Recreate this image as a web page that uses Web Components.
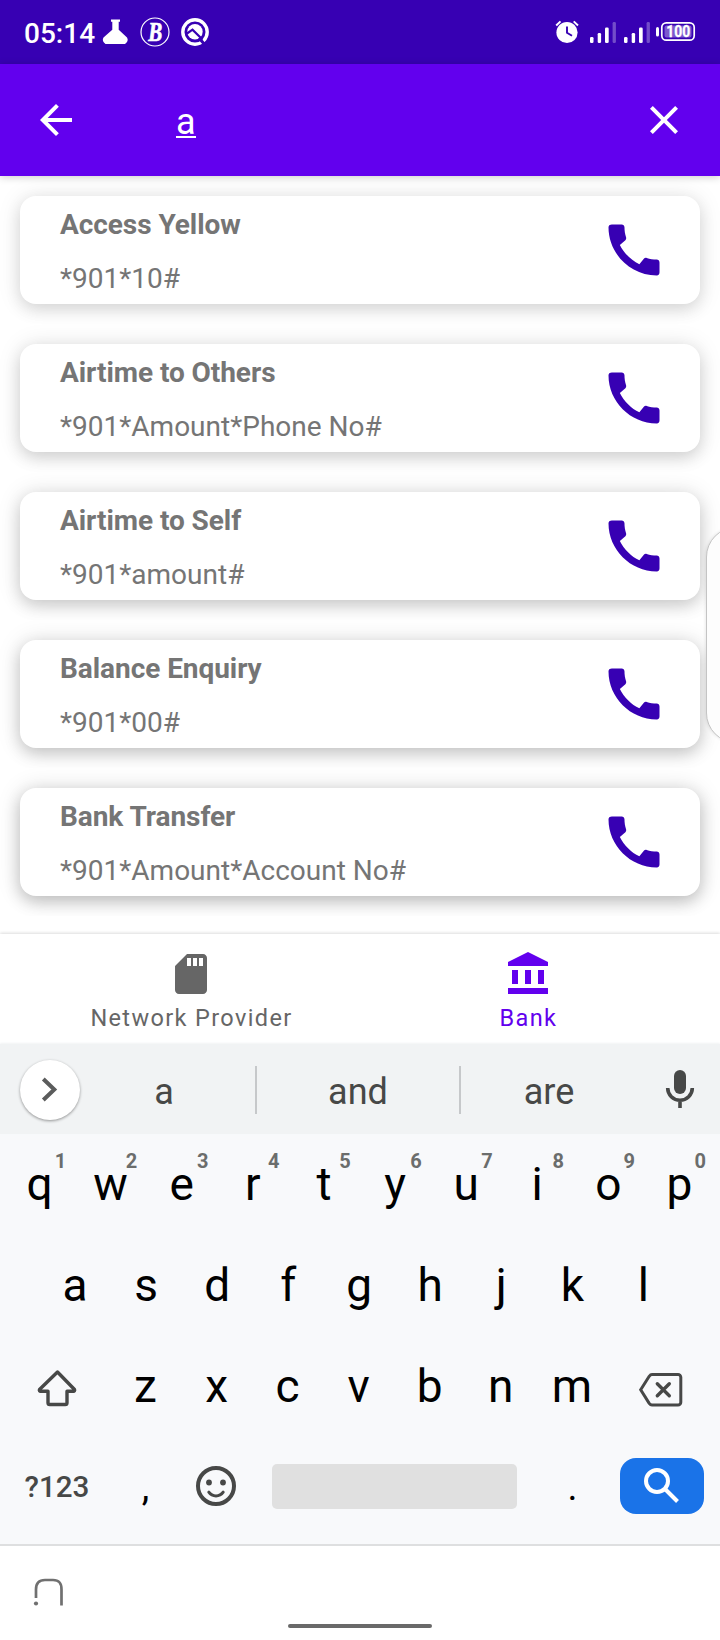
<!DOCTYPE html>
<html lang="en">
<head>
<meta charset="utf-8">
<title>USSD codes</title>
<style>
html,body{margin:0;padding:0;background:#fff}
body{font-family:Roboto,"Liberation Sans",sans-serif;width:720px;height:1640px;overflow:hidden}
</style>
</head>
<body>
<phone-screen>
  <status-bar></status-bar>
  <search-bar>a</search-bar>
  <code-list>
    <code-card style="--a:.11;--b:.10" label="Access Yellow">*901*10#</code-card>
    <code-card style="--a:.13;--b:.11" label="Airtime to Others">*901*Amount*Phone No#</code-card>
    <code-card style="--a:.15;--b:.12" label="Airtime to Self">*901*amount#</code-card>
    <code-card style="--a:.17;--b:.13" label="Balance Enquiry">*901*00#</code-card>
    <code-card style="--a:.19;--b:.14" label="Bank Transfer">*901*Amount*Account No#</code-card>
  </code-list>
  <bottom-tabs></bottom-tabs>
  <suggestion-strip></suggestion-strip>
  <soft-keyboard></soft-keyboard>
  <gesture-bar></gesture-bar>
  <edge-panel></edge-panel>
</phone-screen>
<script>
const make = (name, html) => customElements.define(name, class extends HTMLElement {
  constructor() {
    super();
    this.attachShadow({mode: 'open'}).innerHTML = html;
  }
});

make('phone-screen', `<style>:host{display:flex;flex-direction:column;position:relative;width:720px;height:1640px;background:#fff;overflow:hidden}</style><slot></slot>`);

make('status-bar', `<style>
:host{display:flex;box-sizing:border-box;flex:none;height:64px;background:#3700b3;color:#fff;padding:0 19px 0 24px;justify-content:space-between}
.g{display:flex}
.t{font-size:28px;font-weight:500;line-height:67px;width:76px;white-space:nowrap}
svg{display:block}
</style>
<div class="g"><span class="t">05:14</span>
<svg width="116" height="64" viewBox="100 0 116 64" fill="#fff">
<path d="M111 19.500h9v2.200h-1.300v8.100l8.300 7.700c1.500 2.500 .5 4.500-2 6.500h-19.500c-2.500-2-3.500-4-2-6.500l8.800-7.700v-8.100h-1.300z"/>
<circle cx="155" cy="32" r="14" fill="none" stroke="#fff" stroke-width="1.200"/>
<text x="148.200" y="40.500" textLength="14" lengthAdjust="spacingAndGlyphs" font-family="Liberation Serif,serif" font-style="italic" font-weight="700" font-size="27" stroke="#fff" stroke-width=".7">B</text>
<circle cx="195" cy="32" r="12.200" fill="none" stroke="#fff" stroke-width="3.400"/>
<circle cx="195" cy="31.800" r="7.700"/>
<path d="M187 33.500l5.500-3.800 10 9.800" fill="none" stroke="#3700b3" stroke-width="2.200"/>
<path d="M199 38l6.500 7.500" stroke="#3700b3" stroke-width="3"/>
</svg></div>
<svg width="150" height="64" viewBox="551 0 150 64">
<circle cx="567" cy="32.500" r="10.600" fill="#fff"/>
<path d="M556.200 25.500l4.300-4.100M578 25.500l-4.300-4.100" stroke="#fff" stroke-width="2"/>
<path d="M567 26.500v6.300l5 3" fill="none" stroke="#3700b3" stroke-width="1.900"/>
<g id="s" fill="#fff"><rect x="590" y="37" width="3.500" height="6" rx="1.300"/><rect x="597.700" y="33" width="3.400" height="10" rx="1.300"/><rect x="605" y="27.500" width="3.700" height="15.500" rx="1.300"/><rect x="612.600" y="22" width="3.300" height="21" rx="1.300" opacity=".3"/></g>
<use href="#s" x="34"/>
<rect x="656" y="27" width="3" height="9.500" rx="1.500" fill="#fff"/>
<rect x="661.800" y="22.800" width="32.400" height="17.400" rx="4.500" fill="none" stroke="#fff" stroke-width="1.700"/>
<rect x="664.500" y="25.500" width="27" height="12" rx="2" fill="#fff" opacity=".35"/>
<text x="666.300" y="37.300" textLength="24" lengthAdjust="spacingAndGlyphs" font-family="Roboto,sans-serif" font-size="16.500" font-weight="700" fill="#fff" stroke="#fff" stroke-width=".3">100</text>
</svg>`);

make('search-bar', `<style>
:host{display:flex;box-sizing:border-box;flex:none;height:112px;background:#6200ee;color:#fff;padding-left:32px;padding-right:32px;box-shadow:0 1px 8px rgba(0,0,0,.2);z-index:1}
svg{display:block;flex:none;margin-top:32px}
.q{flex:1;padding-left:96px;font-size:36px;line-height:116px}
.q span{display:inline-block;height:42px;line-height:42px;position:relative}
.q span::after{content:"";position:absolute;left:0;right:0;bottom:5px;height:2px;background:#fff}
</style>
<svg width="48" height="48" viewBox="0 0 24 24" fill="#fff"><path d="M20 11H7.830l5.590-5.590L12 4l-8 8 8 8 1.410-1.410L7.830 13H20v-2z"/></svg>
<div class="q"><span><slot></slot></span></div>
<svg width="48" height="48" viewBox="0 0 24 24" fill="#fff"><path d="M19 6.410L17.590 5 12 10.590 6.410 5 5 6.410 10.590 12 5 17.590 6.410 19 12 13.410 17.590 19 19 17.590 13.410 12z"/></svg>`);

make('code-list', `<style>:host{display:flex;flex-direction:column;flex:none;height:758px;background:#fff}</style><slot></slot>`);

customElements.define('code-card', class extends HTMLElement {
  constructor() {
    super();
    this.attachShadow({mode: 'open'}).innerHTML = `<style>
:host{display:block;box-sizing:border-box;height:148px;padding:20px;overflow:hidden;color:#757575}
.c{display:flex;box-sizing:border-box;height:108px;border-radius:16px;background:#fff;padding:2px 32px 0 40px;justify-content:space-between;box-shadow:0 6px 16px rgba(0,0,0,var(--a)),0 1px 24px rgba(0,0,0,var(--b))}
b,span{display:block;font-size:28px;line-height:54px;height:54px;white-space:nowrap}
b{letter-spacing:-.06px}
svg{display:block;margin-top:18px}
</style><div class="c"><div><b></b><span><slot></slot></span></div>
<svg width="68" height="68" viewBox="0 0 24 24" fill="#3700b3"><path d="M20.010 15.380c-1.230 0-2.420-.2-3.530-.560-.350-.120-.740-.030-1.010.240l-1.570 1.970c-2.830-1.350-5.480-3.900-6.890-6.830l1.950-1.660c.270-.280.350-.670.240-1.020-.370-1.110-.560-2.300-.560-3.530 0-.540-.450-.990-.990-.990H4.190C3.650 3 3 3.240 3 3.990 3 13.280 10.730 21 20.010 21c.710 0 .990-.630.990-1.180v-3.450c0-.540-.450-.990-.990-.990z"/></svg></div>`;
  }
  connectedCallback() { this.shadowRoot.querySelector('b').textContent = this.getAttribute('label'); }
});

make('bottom-tabs', `<style>
:host{display:grid;box-sizing:border-box;flex:none;grid-template-columns:336px 336px;justify-content:center;height:110px;background:#fff;box-shadow:0 -1px 3px rgba(0,0,0,.14);color:#666}
div{display:flex;flex-direction:column;align-items:center;padding-top:16px}
svg{display:block}
span{font-size:23.500px;letter-spacing:1.370px;line-height:36px;margin-top:2px;white-space:nowrap}
.n svg{margin-right:2px}.n span{margin-right:1px}
.on span{margin-left:1px}
.on{color:#6200ee}
</style>
<div class="n"><svg width="48" height="48" viewBox="0 0 24 24" fill="currentColor"><path d="M18 2h-8L4.020 8 4 20c0 1.100.900 2 2 2h12c1.100 0 2-.900 2-2V4c0-1.100-.900-2-2-2zm-6 6h-2V4h2v4zm3 0h-2V4h2v4zm3 0h-2V4h2v4z"/></svg><span>Network Provider</span></div>
<div class="on"><svg width="48" height="48" viewBox="0 0 48 48" fill="currentColor"><path d="M24 2l20 10v4H4v-4zM8 20h6v14H8zM21 20h6v14h-6zM34 20h6v14h-6zM4 38h40v6H4z"/></svg><span>Bank</span></div>`);

make('suggestion-strip', `<style>
:host{display:grid;box-sizing:border-box;flex:none;grid-template-columns:73px 184px 204px 176px 83px;align-items:center;height:90px;background:#f1f3f4;color:#474847;font-size:36px;text-align:center;box-shadow:0 -1px 2px #f1f3f4;z-index:1}
i{display:grid;place-items:center;width:60px;height:60px;border-radius:50%;background:#fff;margin:2px 0 0 20px;box-shadow:0 1px 3px rgba(0,0,0,.4)}
span{display:block;box-sizing:border-box;height:48px;line-height:53px;margin-top:2px;border-right:2px solid #c6c8ca}
span.l{border:0}
svg{display:block}
.m{margin-left:19px}
</style>
<i><svg width="60" height="60" viewBox="20 1060 60 60"><path d="M43.300 1079l11 10.500-11 10.500" fill="none" stroke="#5b5c5c" stroke-width="4"/></svg></i>
<span>a</span><span>and</span><span class="l">are</span>
<svg class="m" width="48" height="48" viewBox="656 1065 48 48"><rect x="674" y="1070" width="12" height="24" rx="6" fill="#474847"/><path d="M667.700 1088a12.300 12.300 0 0 0 24.600 0M680 1100v8" fill="none" stroke="#474847" stroke-width="3.600"/></svg>`);

customElements.define('key-cap', class extends HTMLElement {
  constructor() {
    super();
    this.attachShadow({mode: 'open'}).innerHTML = `<style>
:host{display:block;position:relative;text-align:center;font-size:46px;line-height:101px;height:101px;color:#000}
sup{position:absolute;left:36.500px;width:40px;top:17px;font-size:20px;line-height:20px;font-weight:700;color:#6b6d6c}
</style><slot></slot><sup></sup>`;
  }
  connectedCallback() {
    const s = this.shadowRoot.querySelector('sup'), h = this.getAttribute('hint');
    if (h) s.textContent = h; else s.remove();
  }
});

const keys = (s, hints = '') => [...s].map((k, i) => `<key-cap${hints ? ` hint="${hints[i]}"` : ''}>${k}</key-cap>`).join('');
make('soft-keyboard', `<style>
:host{display:block;box-sizing:border-box;flex:none;height:412px;background:#f8f9fb;border-bottom:2px solid #dedfe0}
.r{display:grid;height:101px;padding:0 4px;align-items:center}
.a{grid-template-columns:repeat(10,71.100px)}
.b{grid-template-columns:repeat(9,71.050px);padding-left:39.500px}
.c{grid-template-columns:106px repeat(7,71.050px) 108px}
.d{grid-template-columns:106px 71px 71px 285px 71px 108px}
svg{display:block;margin:auto}
.sym{font-size:29.600px;font-weight:500;color:#474847;text-align:center;line-height:96px;height:98px}
.p{font-size:38px;text-align:center;line-height:101px;color:#000}
.sp{height:45px;border-radius:5px;background:#e0e0e0;margin:0 20px 2px}
.go{height:56px;border-radius:16px;background:#1a73e8;margin:0 12px 3px}
.go svg{margin:0}
</style>
<div class="r a">${keys('qwertyuiop', '1234567890')}</div>
<div class="r b">${keys('asdfghjkl')}</div>
<div class="r c"><svg width="44" height="44" viewBox="34.500 1364.500 44 44"><path d="M57 1371.500l17 17.500c.5 1-.2 1.700-1 1.700h-6.500v11.500c0 1-.8 1.800-1.800 1.800h-15.400c-1 0-1.800-.8-1.800-1.800v-11.500h-7.500c-.8 0-1.500-.7-1-1.700z" fill="none" stroke="#474847" stroke-width="3.400" stroke-linejoin="round"/></svg>${keys('zxcvbnm')}<svg width="48" height="48" viewBox="638 1363 48 48" fill="none" stroke="#474847" stroke-width="3"><path d="M653 1374.500h26a2.800 2.800 0 0 1 2.800 2.800v25a2.800 2.800 0 0 1-2.800 2.800h-26c-1.500 0-2-.7-2.800-1.800l-8.500-13.500 8.500-13.500c.8-1.100 1.300-1.800 2.800-1.800z"/><path d="M658.300 1383.700l12 12m0-12l-12 12" stroke-width="3.400" stroke-linecap="round"/></svg></div>
<div class="r d"><div class="sym">?123</div><div class="p">,</div>
<svg width="44" height="44" viewBox="195 1466 44 44" fill="none" stroke="#474847"><circle cx="216" cy="1486" r="18" stroke-width="4"/><g fill="#474847" stroke="none"><circle cx="209" cy="1482.500" r="2.900"/><circle cx="223" cy="1482.500" r="2.900"/></g><path d="M208.800 1492.200c3.600 5 10.800 5 14.400 0" stroke-width="3" stroke-linecap="round"/></svg>
<div class="sp"></div><div class="p">.</div>
<div class="go"><svg width="84" height="56" viewBox="620 1458 84 56" fill="none" stroke="#fff" stroke-width="4"><circle cx="657" cy="1481" r="11"/><path d="M665 1489l12.500 12.500"/></svg></div></div>`);

make('gesture-bar', `<style>
:host{display:block;flex:1;background:#fff}
svg{display:block}
</style><svg width="720" height="94" viewBox="0 1546 720 94"><path d="M36 1598v-8.500c0-7 3.200-9.500 9-9.500h8c5.800 0 8.500 2.500 8.500 9.500v16" fill="none" stroke="#707070" stroke-width="2.700"/><circle cx="36" cy="1603.500" r="2.100" fill="#707070"/><rect x="288" y="1624" width="144" height="4" rx="2" fill="#696969"/></svg>`);

make('edge-panel', `<style>
:host{display:block;position:absolute;box-sizing:border-box;left:706px;top:527px;width:60px;height:216px;border:1px solid #c4c4c4;border-radius:32px;background:#fdfdfd;box-shadow:-1px 0 3px rgba(0,0,0,.08)}
</style>`);
</script>
</body>
</html>
